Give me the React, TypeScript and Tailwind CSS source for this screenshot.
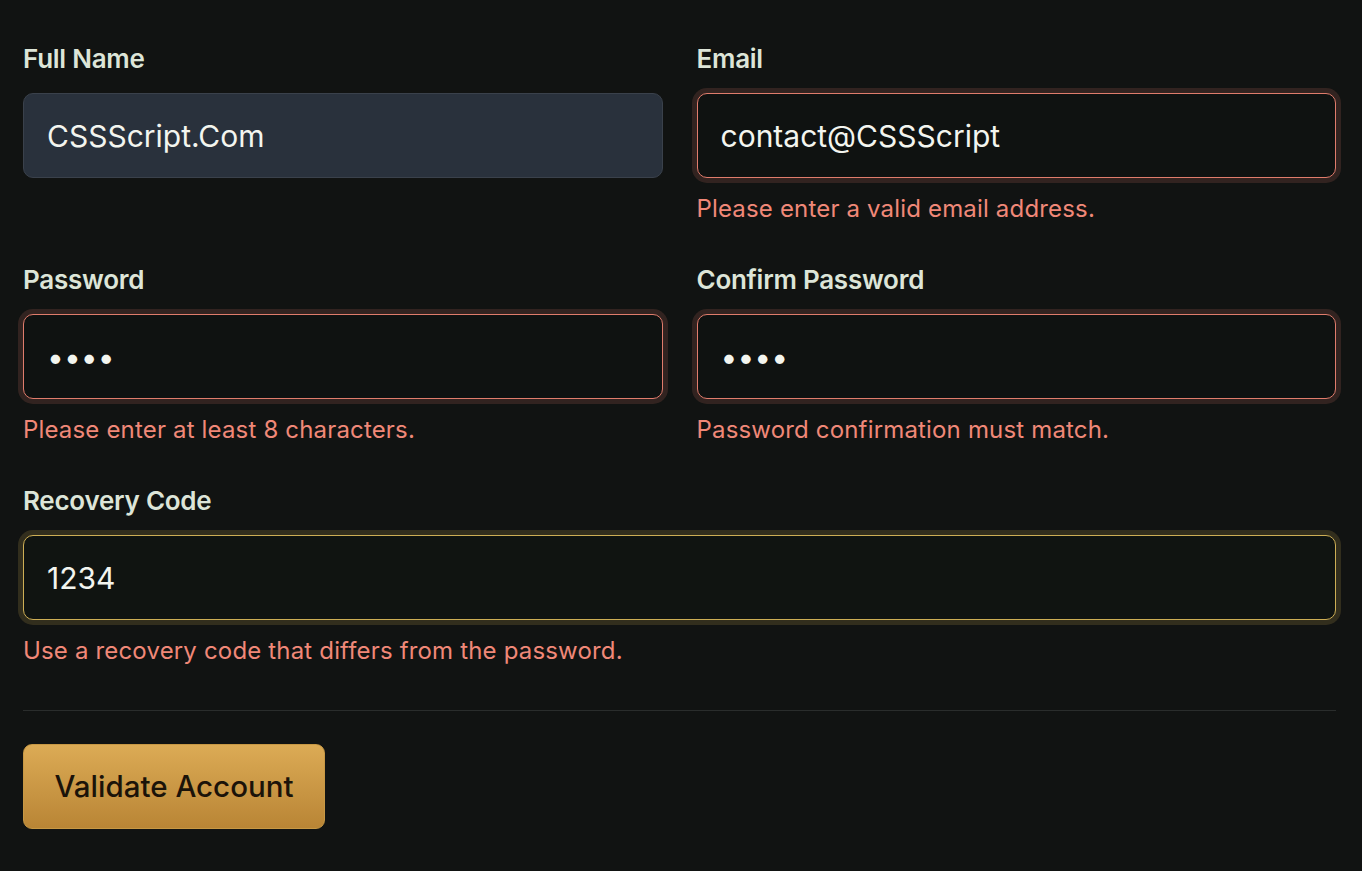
import React from "react";

const labelCls =
  "block text-[26px] leading-[34px] font-semibold text-[#dde5d8] mb-[17px] tracking-[-0.01em]";
const errCls = "mt-[16px] text-[24px] leading-[30px] tracking-[0.007em] text-[#f08878]";
const baseInput =
  "block w-full h-[85px] rounded-[10px] border px-[23px] text-[30px] text-[#f3f5ef] outline-none";

function Field({
  label,
  value,
  type = "text",
  variant,
  error,
}: {
  label: string;
  value: string;
  type?: string;
  variant: "neutral" | "error" | "warn";
  error?: string;
}) {
  const v =
    variant === "neutral"
      ? "bg-[#29313c] border-[#3a414b]"
      : variant === "error"
      ? "bg-[#0f1211] border-[#e07c6c] shadow-[0_0_0_5px_rgba(224,124,108,0.16)]"
      : "bg-[#101411] border-[#cdae55] shadow-[0_0_0_5px_rgba(205,174,85,0.18)]";
  return (
    <div>
      <label className={labelCls}>{label}</label>
      <input readOnly type={type} value={value} className={`${baseInput} ${v}`} />
      {error && <p className={errCls}>{error}</p>}
    </div>
  );
}

export default function App() {
  return (
    <div
      className="min-h-screen bg-[#111312] pl-[23px] pr-[26px] pt-[42px]"
      style={{ fontFamily: "Inter, 'Noto Sans', sans-serif" }}
    >
      <div className="grid grid-cols-2 gap-x-[34px] gap-y-[39px]">
        <Field label="Full Name" value="CSSScript.Com" variant="neutral" />
        <Field
          label="Email"
          value="contact@CSSScript"
          variant="error"
          error="Please enter a valid email address."
        />
        <Field
          label="Password"
          value="1234"
          type="password"
          variant="error"
          error="Please enter at least 8 characters."
        />
        <Field
          label="Confirm Password"
          value="1234"
          type="password"
          variant="error"
          error="Password confirmation must match."
        />
        <div className="col-span-2">
          <Field
            label="Recovery Code"
            value="1234"
            variant="warn"
            error="Use a recovery code that differs from the password."
          />
        </div>
      </div>
      <div className="mt-[44px] border-t border-[#2a2d2c]" />
      <button className="mt-[33px] h-[85px] w-[302px] rounded-[9px] bg-gradient-to-b from-[#dcab55] to-[#b98535] text-[29.5px] font-medium text-[#1b1309] border border-[#c79844]">
        Validate Account
      </button>
    </div>
  );
}
